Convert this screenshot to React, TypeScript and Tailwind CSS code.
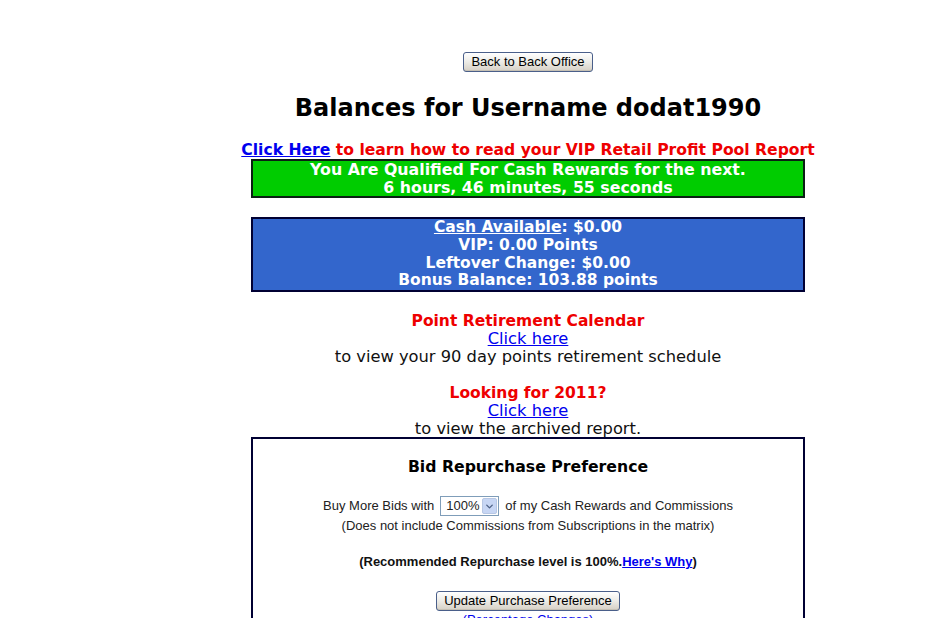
import { ChevronDown } from "lucide-react";

const verdana = "font-['DejaVu_Sans',Verdana,sans-serif]";
const arial = "font-['Liberation_Sans',Arial,sans-serif]";

function XpButton({ children }: { children: React.ReactNode }) {
  return (
    <button
      className={`${arial} rounded-[3px] border border-[#4a5f8a] bg-gradient-to-b from-white via-[#ecebe6] to-[#d6d0c5] px-[7px] text-[13px] leading-[18px] text-black shadow-[inset_0_-1px_0_#c5c0b4]`}
    >
      {children}
    </button>
  );
}

export default function App() {
  return (
    <div className="min-h-[618px] bg-white">
      <div className={`${verdana} ml-[228px] flex w-[600px] flex-col items-center pt-[52px] text-center`}>
        <XpButton>Back to Back Office</XpButton>

        <h1 className="mt-[21px] text-[24px] font-bold leading-[30px] text-black">
          Balances for Username dodat1990
        </h1>

        <div className="mt-[19px] text-[15.6px] font-bold leading-[17px] text-[#ee0000]">
          <a href="#" className="text-[#0000ee] underline">
            Click Here
          </a>{" "}
          to learn how to read your VIP Retail Profit Pool Report
        </div>

        <div className="w-[554px] border-2 border-[#0b1f14] bg-[#00cc00] text-[15.8px] font-bold leading-[17.5px] text-white">
          <div>You Are Qualified For Cash Rewards for the next.</div>
          <div>6 hours, 46 minutes, 55 seconds</div>
        </div>

        <div className="mt-[19px] w-[554px] border-2 border-[#000033] bg-[#3366cc] text-[15.5px] font-bold leading-[17.75px] text-white">
          <div>
            <span className="underline">Cash Available</span>: $0.00
          </div>
          <div>VIP: 0.00 Points</div>
          <div>Leftover Change: $0.00</div>
          <div>Bonus Balance: 103.88 points</div>
        </div>

        <div className="mt-[20px] flex flex-col items-center text-[16.3px] leading-[18px]">
          <div className="text-[15.5px] font-bold text-[#ee0000]">Point Retirement Calendar</div>
          <a href="#" className="text-[#0000ee] underline">
            Click here
          </a>
          <div className="text-[#111]">to view your 90 day points retirement schedule</div>
          <div className="h-[18px]" />
          <div className="text-[15.5px] font-bold text-[#ee0000]">Looking for 2011?</div>
          <a href="#" className="text-[#0000ee] underline">
            Click here
          </a>
          <div className="text-[#111]">to view the archived report.</div>
        </div>

        <div className="-mt-[1px] w-[554px] border-2 border-[#000033] bg-white">
          <div className="mt-[18px] text-[15.7px] font-bold leading-[20px] text-black">
            Bid Repurchase Preference
          </div>

          <div className={`${arial} mt-[19px] flex items-center justify-center text-[13px] leading-[20px] text-[#222]`}>
            <span>Buy More Bids with</span>
            <span className="mx-[6px] flex h-[20px] w-[59px] items-center border border-[#7f9db9] bg-white">
              <span className="flex-1 pl-[5px] text-left">100%</span>
              <span className="mr-[1px] flex h-[16px] w-[15px] items-center justify-center rounded-[2px] border border-[#b7c7e4] bg-[#c7d6f4]">
                <ChevronDown size={11} strokeWidth={3} className="text-[#4d6185]" />
              </span>
            </span>
            <span>of my Cash Rewards and Commissions</span>
          </div>
          <div className={`${arial} text-[13px] leading-[20px] text-[#222]`}>
            (Does not include Commissions from Subscriptions in the matrix)
          </div>

          <div className={`${arial} mt-[16px] text-[13px] font-bold leading-[20px] text-[#111]`}>
            (Recommended Repurchase level is 100%.
            <a href="#" className="text-[#0000ee] underline">
              Here's Why
            </a>
            )
          </div>

          <div className="mt-[16px]">
            <XpButton>Update Purchase Preference</XpButton>
          </div>
          <div className={`${arial} text-[13px] leading-[16px]`}>
            <a href="#" className="text-[#0000ee] underline">
              (Percentage Changes)
            </a>
          </div>
          <div className="h-[20px]" />
        </div>
      </div>
    </div>
  );
}
